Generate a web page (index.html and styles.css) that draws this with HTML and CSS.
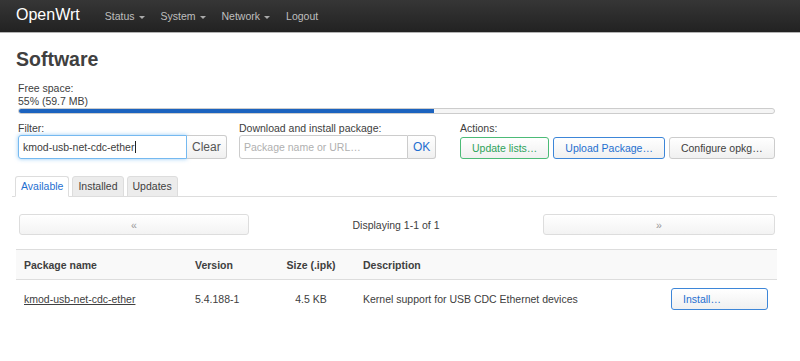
FILE: index.html
```html
<!DOCTYPE html>
<html lang="en">
<head>
    <meta charset="UTF-8">
    <meta name="viewport" content="width=device-width, initial-scale=1.0">
    <title>Software - OpenWrt</title>
    <link rel="stylesheet" href="styles.css">
</head>
<body>
    <header class="topbar">
        <a class="brand" href="#">OpenWrt</a>
        <ul class="nav">
            <li><a href="#">Status<span class="caret"></span></a></li>
            <li><a href="#">System<span class="caret"></span></a></li>
            <li><a href="#">Network<span class="caret"></span></a></li>
            <li><a href="#">Logout</a></li>
        </ul>
    </header>

    <main class="content">
        <h2>Software</h2>

        <!-- Free space -->
        <div class="freespace">
            <div class="freespace-label">Free space:</div>
            <div class="freespace-value">55% (59.7 MB)</div>
            <div class="progress"><div class="progress-bar" style="width: 55%"></div></div>
        </div>

        <!-- Filter / download / actions -->
        <div class="controls">
            <div class="control">
                <label>Filter:</label>
                <div class="input-group">
                    <div class="text-input is-focused">kmod-usb-net-cdc-ether<span class="text-caret"></span></div>
                    <button class="addon">Clear</button>
                </div>
            </div>
            <div class="control">
                <label>Download and install package:</label>
                <div class="input-group">
                    <input class="text-input" type="text" placeholder="Package name or URL…">
                    <button class="addon addon-link">OK</button>
                </div>
            </div>
            <div class="control control-actions">
                <label>Actions:</label>
                <div class="actions">
                    <button class="btn btn-positive">Update lists…</button>
                    <button class="btn btn-action">Upload Package…</button>
                    <button class="btn">Configure opkg…</button>
                </div>
            </div>
        </div>

        <!-- Tabs -->
        <ul class="tabs">
            <li class="tab active">Available</li>
            <li class="tab">Installed</li>
            <li class="tab">Updates</li>
        </ul>

        <!-- Pager -->
        <div class="pager">
            <button class="pager-btn">«</button>
            <div class="pager-text">Displaying 1-1 of 1</div>
            <button class="pager-btn">»</button>
        </div>

        <!-- Packages -->
        <table class="pkg-table">
            <colgroup>
                <col class="col-name">
                <col class="col-version">
                <col class="col-size">
                <col class="col-desc">
                <col class="col-action">
            </colgroup>
            <thead>
                <tr>
                    <th>Package name</th>
                    <th>Version</th>
                    <th class="center">Size (.ipk)</th>
                    <th>Description</th>
                    <th></th>
                </tr>
            </thead>
            <tbody>
                <tr>
                    <td><a href="#">kmod-usb-net-cdc-ether</a></td>
                    <td>5.4.188-1</td>
                    <td class="center">4.5 KB</td>
                    <td>Kernel support for USB CDC Ethernet devices</td>
                    <td><button class="btn btn-install">Install…</button></td>
                </tr>
            </tbody>
        </table>
    </main>
</body>
</html>
```

FILE: styles.css
```css
body {
    margin: 0;
    font-family: "Liberation Sans", Arial, sans-serif;
    font-size: 10.5px;
    line-height: 14px;
    color: #404040;
    background-color: #fff;
}

/* Top bar */
.topbar {
    display: flex;
    align-items: flex-start;
    height: 32px;
    padding-left: 16px;
    background: linear-gradient(#363636, #222); /* dark bar */
    box-shadow: 0 1px 0 #b3b3b3;
}
.brand {
    color: #fff;
    font-size: 16px;
    line-height: 29px;
    text-decoration: none;
    margin-right: 17px;
}
.nav {
    display: flex;
    list-style: none;
    margin: 0;
    padding: 0;
}
.nav a {
    display: block;
    padding: 0 8px;
    line-height: 32px;
    color: #bfbfbf;
    text-decoration: none;
}
.caret {
    display: inline-block;
    margin-left: 4px;
    vertical-align: middle;
    border-top: 3px solid #aaa;
    border-left: 3px solid transparent;
    border-right: 3px solid transparent;
}

/* Content */
.content {
    padding: 0 23px 0 16px;
}
h2 {
    margin: 15px 0 10px;
    font-size: 19.5px;
    line-height: 24px;
    font-weight: bold;
}

.freespace {
    margin: 0 2px;
}
.freespace-value {
    line-height: 13px;
}
.progress {
    height: 4px;
    border: 1px solid #ccc;
    border-radius: 3px;
    background-color: #f5f5f5;
    overflow: hidden;
}
.progress-bar {
    height: 100%;
    background-color: #1c63bf;
}

.controls {
    display: flex;
    margin: 7px 0 0 2px;
}
.control {
    width: 221px;
}
.control-actions {
    flex: 1;
}
.control label {
    display: block;
    line-height: 14px;
}
.input-group {
    display: flex;
    height: 24px;
}
.text-input {
    box-sizing: border-box;
    width: 169px;
    height: 24px;
    margin: 0;
    padding: 0 4px;
    border: 1px solid #ccc;
    border-radius: 3px 0 0 3px;
    font-family: inherit;
    font-size: 10.5px;
    line-height: 22px;
    color: #404040;
    outline: none;
}
.text-input::placeholder {
    color: #b0b0b0;
}
.text-input.is-focused {
    border-color: rgba(82, 168, 236, 0.8);
    box-shadow: 0 0 4px rgba(82, 168, 236, 0.6);
}
.text-caret {
    display: inline-block;
    width: 1px;
    height: 12px;
    margin-left: 1px;
    vertical-align: -2px;
    background-color: #222;
}
.addon {
    height: 24px;
    margin: 0;
    padding: 0 5px;
    border: 1px solid #ccc;
    border-left: 0;
    border-radius: 0 3px 3px 0;
    background: linear-gradient(#fff, #f0f0f0);
    font-family: inherit;
    font-size: 12px;
    color: #555;
}
.addon-link {
    color: #1f6fd0;
}

.actions {
    display: flex;
    gap: 4px;
    margin-top: 2px;
}
.btn {
    height: 22px;
    margin: 0;
    padding: 0 11px;
    border: 1px solid #ccc;
    border-radius: 3px;
    background: linear-gradient(#fff, #f0f0f0);
    font-family: inherit;
    font-size: 10.5px;
    color: #404040;
    cursor: pointer;
}
.btn-positive {
    border-color: #4cbb77;
    color: #2ea35b;
}
.btn-action {
    border-color: #3d86d8;
    color: #1f6fd0;
}

/* Tabs */
.tabs {
    display: flex;
    gap: 3px;
    list-style: none;
    margin: 17px 0 0 -4px;
    padding: 0 0 0 3px;
    border-bottom: 1px solid #ddd;
}
.tab {
    margin-bottom: -1px;
    padding: 0 5px;
    line-height: 19px;
    border: 1px solid #ddd;
    border-radius: 3px 3px 0 0;
    background-color: #ececec;
}
.tab.active {
    background-color: #fff;
    border-bottom-color: #fff;
    color: #1f6fd0;
}

/* Pager */
.pager {
    display: grid;
    grid-template-columns: 230px 1fr 232px;
    align-items: center;
    margin: 17px 2px 0 3px;
}
.pager-btn {
    height: 21px;
    border: 1px solid #ddd;
    border-radius: 3px;
    background: linear-gradient(#fff, #f3f3f3);
    font-family: inherit;
    font-size: 10.5px;
    color: #999;
}
.pager-text {
    text-align: center;
}

/* Package table */
.pkg-table {
    width: 100%;
    margin-top: 14px;
    table-layout: fixed;
    border-collapse: separate;
    border-spacing: 0;
}
.col-name { width: 171px; }
.col-version { width: 80px; }
.col-size { width: 88px; }
.col-action { width: 114px; }
.pkg-table th {
    height: 29px;
    padding: 0 8px;
    text-align: left;
    font-weight: bold;
    background-color: #f9f9f9;
    border-top: 1px solid #ddd;
    border-bottom: 1px solid #ddd;
}
.pkg-table td {
    padding: 8px;
    vertical-align: middle;
}
.pkg-table .center {
    text-align: center;
}
.pkg-table a {
    color: #404040;
}
.btn-install {
    width: 97px;
    text-align: left;
    border-color: #3d86d8;
    color: #1f6fd0;
}
```
